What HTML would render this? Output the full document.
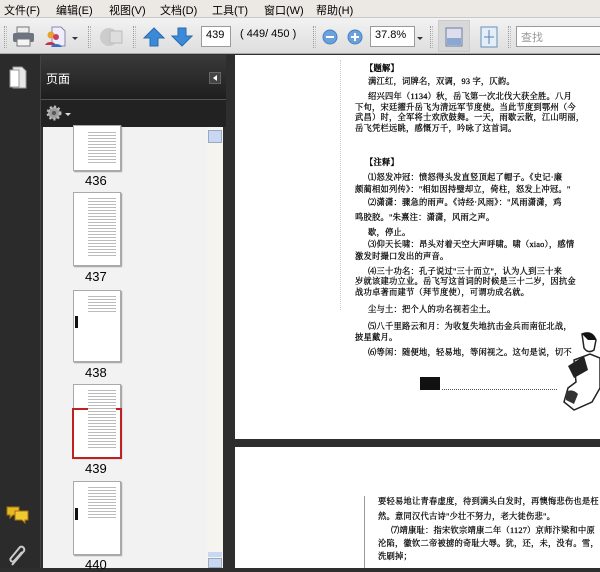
<!DOCTYPE html>
<html><head><meta charset="utf-8"><style>
*{margin:0;padding:0;box-sizing:border-box}
body{width:600px;height:568px;overflow:hidden;position:relative;background:#2e2e2e;font-family:"Liberation Sans","Noto Sans CJK SC",sans-serif}
.a{position:absolute}
.menu{left:0;top:0;width:600px;height:18px;background:#ece9e4;font-size:11px;color:#000;border-bottom:1px solid #c8c8c8}
.menu span{position:absolute;top:2px}
.tb{left:0;top:18px;width:600px;height:36px;background:linear-gradient(#f2f2f2,#dedede);border-bottom:1px solid #aaa}
.sep{position:absolute;top:8px;width:3px;height:22px;border-left:1px dotted #999;border-right:1px dotted #bbb}
.box{position:absolute;background:#fff;border:1px solid #9a9a9a;font-size:11px;padding:2px 4px;height:21px;top:8px}
.pg{position:absolute;font-family:"Liberation Serif","Noto Serif CJK SC",serif;font-size:8.3px;letter-spacing:0.2px;color:#000;-webkit-text-stroke:0.25px #000;white-space:nowrap;line-height:10px}
.th{position:absolute;left:73px;width:48px;background:#fff;border:1px solid #aaa;box-shadow:1px 1px 1px #999}
.lb{position:absolute;left:85px;font-size:13px;color:#000}
</style></head><body>
<div class="a menu">
<span style="left:4px">文件(F)</span><span style="left:56px">编辑(E)</span><span style="left:109px">视图(V)</span><span style="left:160px">文档(D)</span><span style="left:212px">工具(T)</span><span style="left:264px">窗口(W)</span><span style="left:316px">帮助(H)</span>
</div>
<div class="a tb">
<div class="sep" style="left:4px"></div>
<svg class="a" style="left:12px;top:8px" width="24" height="22"><rect x="5" y="1" width="12" height="6" fill="#eee" stroke="#777"/><rect x="1" y="7" width="21" height="9" rx="2" fill="#6c7480"/><rect x="5" y="13" width="13" height="7" fill="#f4f4f4" stroke="#777"/></svg>
<svg class="a" style="left:43px;top:7px" width="26" height="24"><path d="M9 2h9l4 4v15H9z" fill="#eef" stroke="#88a"/><circle cx="8" cy="10" r="3.5" fill="#e6a030"/><circle cx="13" cy="12" r="3" fill="#c84060"/><path d="M2 20a6 5 0 0 1 11 0z" fill="#c03050"/><path d="M8 22a6 5 0 0 1 11 0z" fill="#3a70c0"/></svg>
<div class="a" style="left:72px;top:19px;border:3px solid transparent;border-top:3px solid #333"></div>
<div class="sep" style="left:88px"></div>
<svg class="a" style="left:97px;top:7px" width="28" height="24"><circle cx="12" cy="12" r="9" fill="#ccc"/><rect x="13" y="6" width="12" height="12" fill="#ddd" stroke="#bbb"/></svg>
<div class="sep" style="left:133px"></div>
<svg class="a" style="left:143px;top:8px" width="22" height="22"><path d="M11 2L21 12H15V20H7V12H1z" fill="#3a8ad8" stroke="#2a6ab0"/></svg>
<svg class="a" style="left:171px;top:8px" width="22" height="22"><path d="M11 20L21 10H15V2H7V10H1z" fill="#3a8ad8" stroke="#2a6ab0"/></svg>
<div class="box" style="left:201px;width:30px">439</div>
<div class="a" style="left:240px;top:10px;font-size:11px">( 449/ 450 )</div>
<div class="sep" style="left:313px"></div>
<svg class="a" style="left:322px;top:11px" width="16" height="16"><circle cx="8" cy="8" r="7" fill="#6aa0dc" stroke="#4a80c0"/><rect x="4" y="7" width="8" height="2" fill="#fff"/></svg>
<svg class="a" style="left:347px;top:11px" width="16" height="16"><circle cx="8" cy="8" r="7" fill="#6aa0dc" stroke="#4a80c0"/><rect x="4" y="7" width="8" height="2" fill="#fff"/><rect x="7" y="4" width="2" height="8" fill="#fff"/></svg>
<div class="box" style="left:370px;width:45px">37.8%</div>
<div class="a" style="left:417px;top:19px;border:3px solid transparent;border-top:3px solid #333"></div>
<div class="sep" style="left:430px"></div>
<div class="a" style="left:438px;top:2px;width:32px;height:32px;background:#d8d8d8;border:1px solid #ccc"></div>
<svg class="a" style="left:445px;top:9px" width="18" height="20"><rect x="1" y="1" width="16" height="18" fill="#dde" stroke="#6a7fa0"/><rect x="2" y="11" width="14" height="7" fill="#8aa8d0"/></svg>
<svg class="a" style="left:480px;top:8px" width="18" height="22"><rect x="1" y="1" width="16" height="20" fill="#e4eef8" stroke="#6a8fb8"/><path d="M9 4v14M4 11h10" stroke="#5a80b0"/></svg>
<div class="sep" style="left:508px"></div>
<div class="box" style="left:516px;width:90px;color:#999">查找</div>
</div>
<div class="a" style="left:0;top:55px;width:41px;height:513px;background:#2b2b2b;border-right:1px solid #444"></div>
<svg class="a" style="left:8px;top:66px" width="20" height="24"><path d="M5 1h9l4 4v17H5z" fill="#e8e8e8" stroke="#999"/><path d="M2 4h9v17H2z" fill="#fff" stroke="#999"/></svg>
<svg class="a" style="left:6px;top:506px" width="24" height="18"><path d="M1 1h12v8H7l-3 3V9H1z" fill="#e8b820" stroke="#a07010"/><path d="M9 5h13v9h-3v3l-3-3H9z" fill="#f0c830" stroke="#a07010"/></svg>
<svg class="a" style="left:8px;top:545px" width="20" height="22"><path d="M4 20L16 6a3 3 0 0 0-4-4L3 13a2 2 0 0 0 3 3l8-9" fill="none" stroke="#ccc" stroke-width="2"/></svg>
<div class="a" style="left:41px;top:55px;width:185px;height:45px;background:linear-gradient(#3a3a3a,#1e1e1e);border-bottom:1px solid #555"></div>
<div class="a" style="left:46px;top:70px;color:#fff;font-size:12px">页面</div>
<div class="a" style="left:209px;top:72px;width:12px;height:12px;background:#444;border:1px solid #666"></div>
<div class="a" style="left:213px;top:75px;border:3px solid transparent;border-right:4px solid #fff;border-left:0"></div>
<div class="a" style="left:41px;top:100px;width:185px;height:27px;background:#222"></div>
<svg class="a" style="left:45px;top:104px" width="18" height="18"><circle cx="9" cy="9" r="6" fill="#999" stroke="#bbb" stroke-width="3" stroke-dasharray="2 2"/><circle cx="9" cy="9" r="2" fill="#555"/></svg>
<div class="a" style="left:65px;top:113px;border:3px solid transparent;border-top:3px solid #ddd"></div>
<div class="a" style="left:43px;top:127px;width:164px;height:441px;background:#f2f2f2"></div>
<div class="a" style="left:207px;top:127px;width:16px;height:441px;background:#f6f4ee"></div>
<div class="a" style="left:208px;top:130px;width:14px;height:13px;background:#c8d8f4;border:1px solid #9ab"></div>
<div class="a" style="left:208px;top:552px;width:14px;height:5px;background:#c8d8f4"></div>
<div class="a" style="left:208px;top:558px;width:14px;height:10px;background:#c8d8f4;border:1px solid #9ab"></div>
<div class="th" style="top:125px;height:46px"></div>
<div class="lb" style="top:173px">436</div>
<div class="th" style="top:192px;height:74px"></div>
<div class="lb" style="top:269px">437</div>
<div class="th" style="top:290px;height:72px"></div>
<div class="lb" style="top:365px">438</div>
<div class="th" style="top:384px;height:74px"></div>
<div class="a" style="left:72px;top:408px;width:50px;height:51px;border:2px solid #c02020"></div>
<div class="lb" style="top:461px">439</div>
<div class="th" style="top:481px;height:74px"></div>
<div class="lb" style="top:557px">440</div>
<div class="a" style="left:88px;top:196px;width:28px;height:60px;background:repeating-linear-gradient(#fff 0 2px,#bbb 2px 3px)"></div>
<div class="a" style="left:88px;top:294px;width:28px;height:20px;background:repeating-linear-gradient(#fff 0 2px,#bbb 2px 3px)"></div>
<div class="a" style="left:75px;top:316px;width:3px;height:12px;background:#111"></div>
<div class="a" style="left:88px;top:388px;width:28px;height:60px;background:repeating-linear-gradient(#fff 0 2px,#bbb 2px 3px)"></div>
<div class="a" style="left:88px;top:485px;width:28px;height:35px;background:repeating-linear-gradient(#fff 0 2px,#bbb 2px 3px)"></div>
<div class="a" style="left:75px;top:508px;width:3px;height:12px;background:#111"></div>
<div class="a" style="left:88px;top:130px;width:28px;height:35px;background:repeating-linear-gradient(#fff 0 2px,#bbb 2px 3px)"></div>
<div class="a" style="left:235px;top:55px;width:365px;height:384px;background:#fff"></div>
<div class="a" style="left:235px;top:447px;width:365px;height:121px;background:#fff"></div>
<div class="a" style="left:340px;top:60px;width:1px;height:250px;border-left:1px dotted #ccc"></div>
<div class="pg" style="left:365px;top:64px;font-weight:bold">【题解】</div>
<div class="pg" style="left:368px;top:77px">满江红，词牌名，双调，93 字，仄韵。</div>
<div class="pg" style="left:368px;top:92px">绍兴四年（1134）秋，岳飞第一次北伐大获全胜。八月</div>
<div class="pg" style="left:355px;top:103px">下旬，宋廷擢升岳飞为清远军节度使。当此节度到鄂州（今</div>
<div class="pg" style="left:355px;top:113px">武昌）时，全军将士欢欣鼓舞。一天，雨歇云散，江山明丽，</div>
<div class="pg" style="left:355px;top:124px">岳飞凭栏远眺，感慨万千，吟咏了这首词。</div>
<div class="pg" style="left:365px;top:158px;font-weight:bold">【注释】</div>
<div class="pg" style="left:368px;top:173px">⑴怒发冲冠：愤怒得头发直竖顶起了帽子。《史记·廉</div>
<div class="pg" style="left:355px;top:185px">颇蔺相如列传》："相如因持璧却立，倚柱，怒发上冲冠。"</div>
<div class="pg" style="left:368px;top:198px">⑵潇潇：骤急的雨声。《诗经·风雨》："风雨潇潇，鸡</div>
<div class="pg" style="left:355px;top:213px">鸣胶胶。"朱熹注：潇潇，风雨之声。</div>
<div class="pg" style="left:368px;top:228px">歇，停止。</div>
<div class="pg" style="left:368px;top:240px">⑶仰天长啸：昂头对着天空大声呼啸。啸（xiao），感情</div>
<div class="pg" style="left:355px;top:252px">激发时撮口发出的声音。</div>
<div class="pg" style="left:368px;top:267px">⑷三十功名：孔子说过"三十而立"，认为人到三十来</div>
<div class="pg" style="left:355px;top:277px">岁就该建功立业。岳飞写这首词的时候是三十二岁，因抗金</div>
<div class="pg" style="left:355px;top:288px">战功卓著而建节（拜节度使），可谓功成名就。</div>
<div class="pg" style="left:368px;top:305px">尘与土：把个人的功名视若尘土。</div>
<div class="pg" style="left:368px;top:322px">⑸八千里路云和月：为收复失地抗击金兵而南征北战，</div>
<div class="pg" style="left:355px;top:333px">披星戴月。</div>
<div class="pg" style="left:368px;top:348px">⑹等闲：随便地，轻易地，等闲视之。这句是说，切不</div>
<div class="a" style="left:420px;top:377px;width:20px;height:13px;background:#111"></div>
<div class="a" style="left:442px;top:389px;width:115px;border-top:1px dotted #555"></div>
<svg class="a" style="left:560px;top:330px" width="40" height="85"><path d="M22 4q10-4 14 6l-2 10q-6 4-10-2zM14 30l16-6 10 4v30l-8 14-18 8-10-8 4-14 8-6z" fill="#fff" stroke="#222" stroke-width="1.5"/><path d="M22 4q10-4 14 6l-8 0z" fill="#111"/><path d="M8 36l16-10 4 14-14 8z" fill="#222"/><path d="M6 62q6-4 12 2l-4 10-8-4z" fill="#333"/></svg>
<div class="a" style="left:364px;top:496px;width:1px;height:72px;background:#999"></div>
<div class="pg" style="left:378px;top:497px">要轻易地让青春虚度，待到满头白发时，再懊悔悲伤也是枉</div>
<div class="pg" style="left:378px;top:512px">然。意同汉代古诗"少壮不努力，老大徒伤悲"。</div>
<div class="pg" style="left:391px;top:526px">⑺靖康耻：指宋钦宗靖康二年（1127）京师汴梁和中原</div>
<div class="pg" style="left:378px;top:539px">沦陷，徽钦二帝被掳的奇耻大辱。犹，还，未，没有。雪，</div>
<div class="pg" style="left:378px;top:552px">洗刷掉；</div>
</body></html>
